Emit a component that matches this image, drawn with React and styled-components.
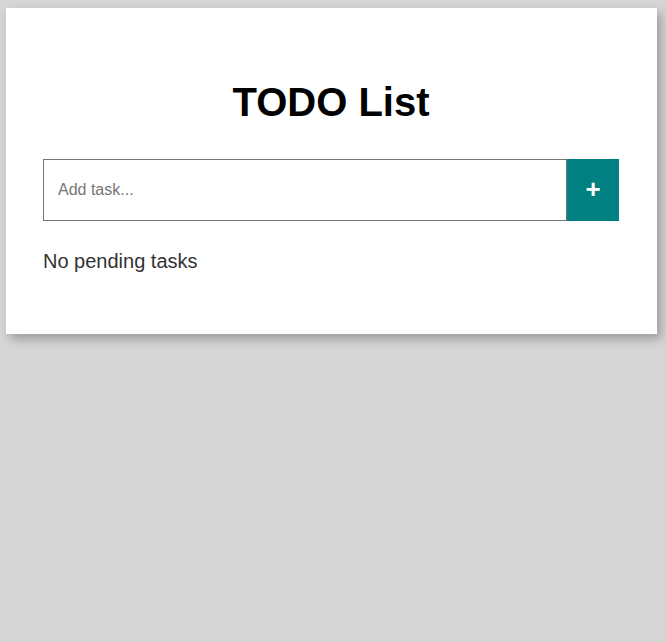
import React, { useState } from 'react'
import styled, { createGlobalStyle } from 'styled-components'

const GlobalStyle = createGlobalStyle`
html, body {
  margin: 0;
  padding: 0;
  background-color: #d6d6d6;
  font-family: "Liberation Sans", Arial, sans-serif;
}
`

const Page = styled.div`
  min-height: 642px;
  padding: 8px 9px 0 6px;
  box-sizing: border-box;
`

const Card = styled.div`
  width: 651px;
  box-sizing: border-box;
  background-color: white;
  padding: 37px 38px 37px 37px;
  box-shadow: 4px 5px 10px rgba(0, 0, 0, 0.28);
`

const Title = styled.h1`
  margin: 35px 0 34px;
  font-size: 40px;
  font-weight: bold;
  text-align: center;
  color: black;
`

const Form = styled.form`
  display: flex;
  height: 62px;
`

const TaskInput = styled.input`
  flex: 1;
  min-width: 0;
  box-sizing: border-box;
  height: 100%;
  border: 1px solid #767676;
  padding: 0 14px;
  font-family: inherit;
  font-size: 16px;
  color: #222;
  outline: none;
  &::placeholder {
    color: #757575;
  }
`

const AddButton = styled.button`
  width: 52px;
  height: 100%;
  border: none;
  background-color: #008080;
  color: white;
  font-family: inherit;
  font-size: 26px;
  font-weight: bold;
  cursor: pointer;
  padding: 0 0 2px;
`

const Empty = styled.p`
  margin: 29px 0 24px;
  font-size: 20px;
  color: #333;
`

const TaskItem = styled.li`
  font-size: 20px;
  color: #333;
  padding: 6px 0;
`

const App = () => {
  const [tasks, setTasks] = useState([])
  const [text, setText] = useState('')

  const addTask = (e) => {
    e.preventDefault()
    if (!text.trim()) return
    setTasks([...tasks, text.trim()])
    setText('')
  }

  return (
    <Page>
      <GlobalStyle />
      <Card>
        <Title>TODO List</Title>
        <Form onSubmit={addTask}>
          <TaskInput
            placeholder="Add task..."
            value={text}
            onChange={(e) => setText(e.target.value)}
          />
          <AddButton type="submit">+</AddButton>
        </Form>
        {tasks.length === 0 ? (
          <Empty>No pending tasks</Empty>
        ) : (
          <ul>
            {tasks.map((t, i) => (
              <TaskItem key={i}>{t}</TaskItem>
            ))}
          </ul>
        )}
      </Card>
    </Page>
  )
}

export default App
